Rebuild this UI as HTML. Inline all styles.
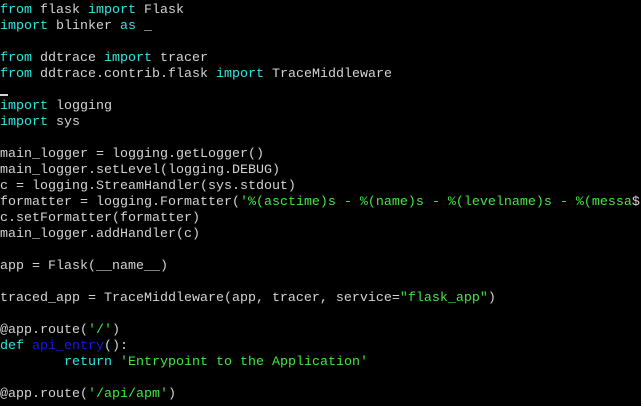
<!DOCTYPE html>
<html><head><style>
html,body{margin:0;padding:0;background:#000;width:641px;height:406px;overflow:hidden}
pre{margin:0;padding-top:3px;font-family:"Liberation Mono","DejaVu Sans Mono",monospace;font-size:13.33px;line-height:16px;color:#d3d3d3;white-space:pre}
.k{color:#2ee6e6}.s{color:#3ee83e}.b{color:#1818e8}
.cur{display:inline-block;width:8px;height:2px;background:#d3d3d3;vertical-align:-3px}
</style></head><body><pre><span class="k">from</span> flask <span class="k">import</span> Flask
<span class="k">import</span> blinker <span class="k">as</span> _

<span class="k">from</span> ddtrace <span class="k">import</span> tracer
<span class="k">from</span> ddtrace.contrib.flask <span class="k">import</span> TraceMiddleware
<span class="cur"></span>
<span class="k">import</span> logging
<span class="k">import</span> sys

main_logger = logging.getLogger()
main_logger.setLevel(logging.DEBUG)
c = logging.StreamHandler(sys.stdout)
formatter = logging.Formatter(<span class="s">'%(asctime)s - %(name)s - %(levelname)s - %(messa</span>$
c.setFormatter(formatter)
main_logger.addHandler(c)

app = Flask(__name__)

traced_app = TraceMiddleware(app, tracer, service=<span class="s">"flask_app"</span>)

@app.route(<span class="s">'/'</span>)
<span class="k">def</span> <span class="b">api_entry</span>():
        <span class="k">return</span> <span class="s">'Entrypoint to the Application'</span>

@app.route(<span class="s">'/api/apm'</span>)
</pre></body></html>
